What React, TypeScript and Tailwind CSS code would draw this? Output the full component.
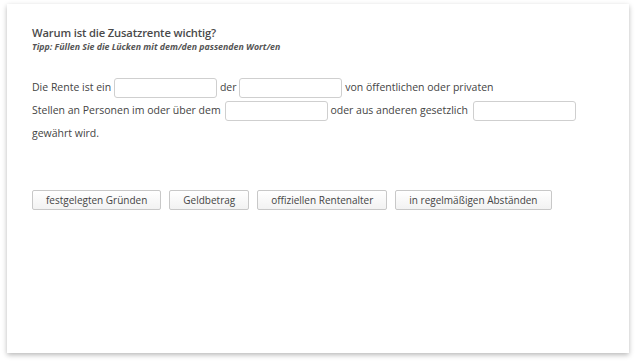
const Blank = ({ w = 103 }: { w?: number }) => (
  <span
    className="inline-block h-[20px] align-middle rounded-[3px] border border-[#cfcfcf] bg-white"
    style={{ width: w }}
  />
);

const words = [
  "festgelegten Gründen",
  "Geldbetrag",
  "offiziellen Rentenalter",
  "in regelmäßigen Abständen",
];

export default function App() {
  return (
    <div className="w-[636px] h-[364px] bg-white pt-[4px] pl-[7px] font-['Open_Sans',sans-serif] text-[#444]">
      <div className="w-[622px] h-[349px] bg-white shadow-[0_2px_5px_rgba(0,0,0,0.28)] pl-[25px] pt-[21px]">
        <h1 className="text-[11.2px] font-semibold leading-[16px] text-[#4a4a4a] tracking-[-0.15px]">
          Warum ist die Zusatzrente wichtig?
        </h1>
        <p className="text-[8.8px] italic font-bold leading-[12px] text-[#555]">
          Tipp: Füllen Sie die Lücken mit dem/den passenden Wort/en
        </p>

        <div className="mt-[23px] text-[10.5px] leading-[23px]">
          <div className="whitespace-nowrap">
            Die Rente ist ein <Blank />
            <span className="ml-[3px]">der </span>
            <Blank />
            <span className="ml-[3px]">von öffentlichen oder privaten</span>
          </div>
          <div className="whitespace-nowrap">
            Stellen an Personen im oder über dem <span className="ml-[2px]" />
            <Blank />
            <span className="ml-[2px]">oder aus anderen gesetzlich </span>
            <span className="ml-[2px]" />
            <Blank />
          </div>
          <div>gewährt wird.</div>
        </div>

        <div className="mt-[45px] flex gap-[8px]">
          {words.map((w) => (
            <button
              key={w}
              className="h-[20px] px-[13px] rounded-[2px] border border-[#c8c8c8] bg-gradient-to-b from-white to-[#f2f2f2] text-[10px] leading-[18px] text-[#444]"
            >
              {w}
            </button>
          ))}
        </div>
      </div>
    </div>
  );
}
